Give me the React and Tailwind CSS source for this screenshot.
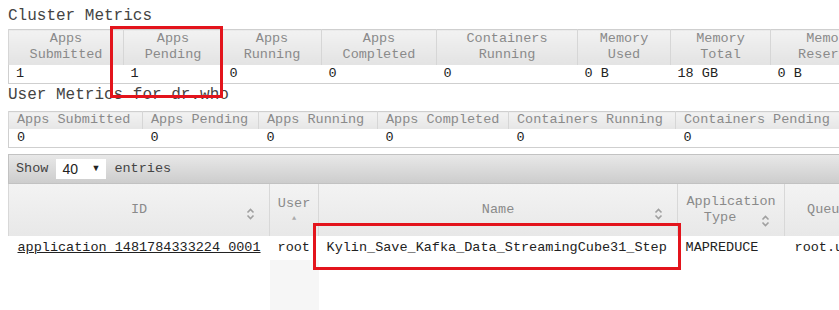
import React from 'react';

const clusterCols = [
  { label: ['Apps', 'Submitted'], value: '1', w: 'w-[115px]' },
  { label: ['Apps', 'Pending'], value: '1', w: 'w-[99px]' },
  { label: ['Apps', 'Running'], value: '0', w: 'w-[99px]' },
  { label: ['Apps', 'Completed'], value: '0', w: 'w-[115px]' },
  { label: ['Containers', 'Running'], value: '0', w: 'w-[141px]' },
  { label: ['Memory', 'Used'], value: '0 B', w: 'w-[93px]' },
  { label: ['Memory', 'Total'], value: '18 GB', w: 'w-[100px]' },
  { label: ['Memory', 'Reserved'], value: '0 B', w: 'w-[120px]' },
];

const userCols = [
  { label: 'Apps Submitted', w: 'w-[134px]' },
  { label: 'Apps Pending', w: 'w-[116px]' },
  { label: 'Apps Running', w: 'w-[119px]' },
  { label: 'Apps Completed', w: 'w-[131px]' },
  { label: 'Containers Running', w: 'w-[167px]' },
  { label: 'Containers Pending', w: 'w-[170px]' },
];

function SortIcon() {
  return (
    <svg width="9" height="12" viewBox="0 0 9 12" className="inline-block">
      <path d="M1.5 4.5 L4.5 1.5 L7.5 4.5" fill="none" stroke="#a0a0a0" strokeWidth="1.6" />
      <path d="M1.5 7.5 L4.5 10.5 L7.5 7.5" fill="none" stroke="#a0a0a0" strokeWidth="1.6" />
    </svg>
  );
}

export default function App() {
  return (
    <div className="w-[839px] h-[310px] overflow-hidden bg-white font-['Liberation_Mono','Courier_New',monospace] text-[13.5px] text-[#222]">
      <div className="relative w-[1100px] pl-2">
        <h3 className="text-base leading-5 text-[#444] pt-[6px] pb-[3px]">Cluster Metrics</h3>
        <table className="table-fixed border-collapse border border-[#cfcfcf]">
          <thead>
            <tr>
              {clusterCols.map((c) => (
                <th key={c.label.join()} className={`${c.w} h-[35px] p-0 font-normal text-center leading-4 text-[#8a8a8a] bg-gradient-to-b from-[#f2f2f2] to-[#e3e3e3] border-x border-[#d6d6d6]`}>
                  {c.label[0]}
                  <br />
                  {c.label[1]}
                </th>
              ))}
            </tr>
          </thead>
          <tbody>
            <tr>
              {clusterCols.map((c) => (
                <td key={c.label.join()} className="h-[19px] px-[7px] py-0 leading-4">{c.value}</td>
              ))}
            </tr>
          </tbody>
        </table>

        <h3 className="text-base leading-5 text-[#444] pt-[1px] pb-[6px]">User Metrics for dr.who</h3>
        <table className="table-fixed border-collapse border border-[#cfcfcf] whitespace-nowrap">
          <thead>
            <tr>
              {userCols.map((c) => (
                <th key={c.label} className={`${c.w} h-[17px] px-[8px] py-0 font-normal text-left leading-4 text-[#8a8a8a] bg-gradient-to-b from-[#f2f2f2] to-[#e6e6e6] border-x border-[#d6d6d6]`}>
                  {c.label}
                </th>
              ))}
            </tr>
          </thead>
          <tbody>
            <tr>
              {userCols.map((c) => (
                <td key={c.label} className="h-[19px] px-[8px] py-0 leading-4">0</td>
              ))}
            </tr>
          </tbody>
        </table>

        <div className="mt-[6px] w-[1000px]">
          <div className="h-[30px] flex items-center gap-2 px-[7px] bg-gradient-to-b from-[#e8e8e8] to-[#cdcdcd] border border-[#c2c2c2]">
            <span className="text-[#444]">Show</span>
            <div className="w-[50px] h-[20px] bg-white flex items-center justify-between px-[6px] font-['Liberation_Sans',Arial,sans-serif] text-[14px] text-[#222]">
              <span>40</span>
              <span className="text-[9px]">▼</span>
            </div>
            <span className="text-[#444]">entries</span>
          </div>
          <table className="table-fixed border-collapse whitespace-nowrap">
            <thead>
              <tr className="bg-gradient-to-b from-[#f3f3f3] to-[#e8e8e8]">
                <th className="w-[260px] h-[52px] p-0 relative font-normal text-center text-[#8a8a8a] border-l border-[#d8d8d8]">
                  ID
                  <span className="absolute right-[14px] top-[21px]"><SortIcon /></span>
                </th>
                <th className="w-[49px] h-[52px] p-0 relative font-normal text-[#8a8a8a] border-x border-[#d8d8d8] align-top">
                  <div className="pt-[12px] leading-4 text-center">User</div>
                  <div className="text-[7px] leading-3 text-center text-[#aaa]">▲</div>
                </th>
                <th className="w-[359px] h-[52px] p-0 relative font-normal text-center text-[#8a8a8a] border-x border-[#d8d8d8]">
                  Name
                  <span className="absolute right-[14px] top-[21px]"><SortIcon /></span>
                </th>
                <th className="w-[107px] h-[52px] p-0 relative font-normal text-center text-[#8a8a8a] border-x border-[#d8d8d8] leading-4">
                  Application
                  <br />
                  <span className="pr-[22px]">Type</span>
                  <span className="absolute right-[14px] top-[30px]"><SortIcon /></span>
                </th>
                <th className="w-[200px] h-[52px] p-0 relative font-normal text-left pl-[22px] text-[#8a8a8a] border-x border-[#d8d8d8]">
                  Queue
                </th>
              </tr>
            </thead>
            <tbody>
              <tr>
                <td className="h-[24px] px-[9px] py-0"><a href="#" className="underline text-[#222]">application_1481784333224_0001</a></td>
                <td className="h-[24px] px-[8px] py-0">root</td>
                <td className="h-[24px] px-[8px] py-0">Kylin_Save_Kafka_Data_StreamingCube31_Step</td>
                <td className="h-[24px] px-[8px] py-0">MAPREDUCE</td>
                <td className="h-[24px] px-[10px] py-0">root.users.root</td>
              </tr>
              <tr>
                <td className="h-[60px]"></td>
                <td className="h-[60px] bg-[#f6f6f6]"></td>
                <td></td>
                <td></td>
                <td></td>
              </tr>
            </tbody>
          </table>
        </div>

        <div className="absolute left-[110px] top-[26px] w-[113px] h-[72px] border-[3px] border-[#e3141c]"></div>
        <div className="absolute left-[313px] top-[223px] w-[368px] h-[47px] border-[3px] border-[#e3141c]"></div>
      </div>
    </div>
  );
}
